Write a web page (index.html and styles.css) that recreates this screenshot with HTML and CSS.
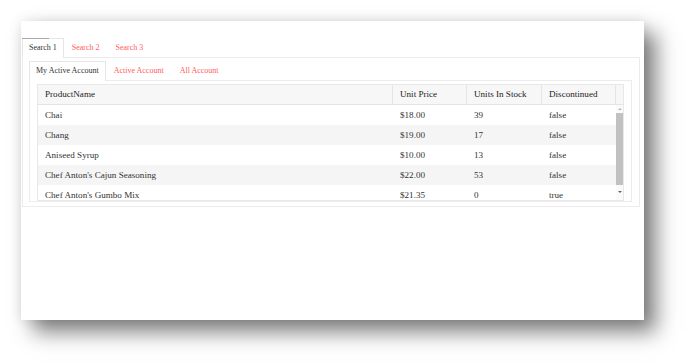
FILE: index.html
```html
<!DOCTYPE html>
<html>
<head>
<meta charset="utf-8">
<link rel="stylesheet" href="styles.css">
</head>
<body>
<div class="window">
  <div class="tab-strip outer-strip">
    <span class="tab active marked">Search 1</span>
    <span class="tab">Search 2</span>
    <span class="tab">Search 3</span>
  </div>
  <div class="pane outer-pane">
    <div class="tab-strip inner-strip">
      <span class="tab active">My Active Account</span>
      <span class="tab">Active Account</span>
      <span class="tab">All Account</span>
    </div>
    <div class="pane inner-pane">
      <div class="grid">
        <div class="grid-head">
          <div class="cell">ProductName</div>
          <div class="cell">Unit Price</div>
          <div class="cell">Units In Stock</div>
          <div class="cell">Discontinued</div>
          <div class="cell"></div>
        </div>
        <div class="grid-body">
          <div class="rows">
            <div class="row"><div class="cell">Chai</div><div class="cell">$18.00</div><div class="cell">39</div><div class="cell">false</div></div>
            <div class="row alt"><div class="cell">Chang</div><div class="cell">$19.00</div><div class="cell">17</div><div class="cell">false</div></div>
            <div class="row"><div class="cell">Aniseed Syrup</div><div class="cell">$10.00</div><div class="cell">13</div><div class="cell">false</div></div>
            <div class="row alt"><div class="cell">Chef Anton's Cajun Seasoning</div><div class="cell">$22.00</div><div class="cell">53</div><div class="cell">false</div></div>
            <div class="row"><div class="cell">Chef Anton's Gumbo Mix</div><div class="cell">$21.35</div><div class="cell">0</div><div class="cell">true</div></div>
          </div>
          <div class="vscroll">
            <span class="arrow up"></span>
            <span class="thumb"></span>
            <span class="arrow down"></span>
          </div>
        </div>
      </div>
    </div>
  </div>
</div>
</body>
</html>
```

FILE: styles.css
```css
html, body {
  margin: 0;
  padding: 0;
  background: #ffffff;
}
body {
  width: 686px;
  height: 362px;
  overflow: hidden;
  font-family: "Liberation Serif", "Times New Roman", serif;
  color: #333333;
}
.window {
  margin: 21px 0 0 21px;
  width: 623px;
  height: 299px;
  box-sizing: border-box;
  padding: 17px 4px 0 1px;
  background: #ffffff;
  box-shadow: 12px 12px 20px rgba(0, 0, 0, 0.5), 0 0 12px rgba(0, 0, 0, 0.1);
}
.tab-strip {
  display: flex;
  align-items: flex-end;
  position: relative;
  z-index: 1;
}
.tab {
  font-size: 8px;
  line-height: 18px;
  height: 18px;
  padding: 0 7px;
  border: 1px solid transparent;
  border-bottom: none;
  color: #ff5c5c;
  white-space: nowrap;
}
.tab.active {
  color: #333333;
  background: #ffffff;
  border-color: #e6e6e6;
  margin-bottom: -1px;
  padding: 0 6px 1px;
}
.marked {
  position: relative;
}
.marked::before {
  content: "";
  position: absolute;
  left: -1px;
  top: -1px;
  width: 27px;
  height: 1px;
  background: #a8a8a8;
}
.pane {
  border: 1px solid #ececec;
  background: #ffffff;
}
.outer-pane {
  padding: 3px 7px 4px 6px;
}
.inner-pane {
  padding: 3px 7px 0 7px;
}
.grid {
  border: 1px solid #e8e8e8;
  font-size: 9.1px;
  color: #333333;
}
.grid-head {
  display: grid;
  grid-template-columns: 354px 74px 75px 74px 1fr;
  background: #f7f7f7;
  border-bottom: 1px solid #e4e4e4;
  color: #222222;
}
.cell {
  box-sizing: border-box;
  padding: 0 7px;
  white-space: nowrap;
  overflow: hidden;
}
.grid-head .cell {
  height: 19px;
  line-height: 19px;
}
.grid-head .cell + .cell {
  border-left: 1px solid #e4e4e4;
}
.grid-body {
  display: flex;
  height: 95px;
  overflow: hidden;
}
.rows {
  flex: 1;
}
.row {
  display: grid;
  grid-template-columns: 354px 74px 75px 74px;
  height: 20px;
  line-height: 20px;
}
.row .cell + .cell {
  border-left: 1px solid transparent;
}
.row.alt {
  background: #f5f5f5;
}
.vscroll {
  width: 7px;
  display: flex;
  flex-direction: column;
  align-items: center;
  background: #fafafa;
}
.arrow {
  width: 0;
  height: 0;
  border-left: 2px solid transparent;
  border-right: 2px solid transparent;
}
.arrow.up {
  margin: 3px 0 3px;
  border-bottom: 2px solid #b5b5b5;
}
.arrow.down {
  margin: 6px 0 0;
  border-top: 2px solid #606060;
}
.thumb {
  width: 7px;
  height: 72px;
  background: #c1c1c1;
}
```
